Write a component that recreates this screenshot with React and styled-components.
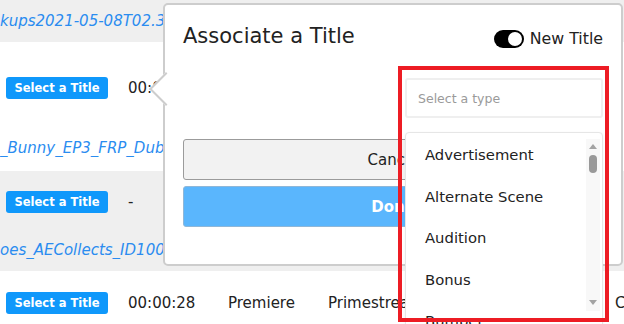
import React from "react"
import styled, { createGlobalStyle } from "styled-components"

const GlobalStyle = createGlobalStyle`
  html, body {
    margin: 0;
    padding: 0;
    background: #fff;
    overflow: hidden;
  }
  body {
    font-family: "DejaVu Sans", "Noto Sans", sans-serif;
    color: #222;
  }
`

const types = ["Advertisement", "Alternate Scene", "Audition", "Bonus", "Bumper"]

const App = () => {
  return (
    <Page>
      <GlobalStyle />
      <Table>
        <Row $shade $height={42}>
          <LinkLine $top={12}>kups2021-05-08T02.30.11_Spot_Final</LinkLine>
        </Row>
        <Row $height={129}>
          <CellLine $top={35}>
            <TitleButton>Select a Title</TitleButton>
            <Cell $clip>00:00:14</Cell>
          </CellLine>
          <LinkLine $top={40}>_Bunny_EP3_FRP_Dub_Master</LinkLine>
        </Row>
        <Row $shade $height={100}>
          <CellLine $top={20}>
            <TitleButton>Select a Title</TitleButton>
            <Cell>-</Cell>
          </CellLine>
          <LinkLine $top={28}>oes_AECollects_ID1001_Final</LinkLine>
        </Row>
        <Row $height={53}>
          <CellLine $top={21}>
            <TitleButton>Select a Title</TitleButton>
            <Cell>00:00:28</Cell>
            <Cell>Premiere</Cell>
            <Cell $wide>Primestream Demo</Cell>
            <Cell>C</Cell>
          </CellLine>
        </Row>
      </Table>

      <Popover>
        <Arrow />
        <Header>
          <Title>Associate a Title</Title>
          <ToggleWrap>
            <Toggle>
              <Knob />
            </Toggle>
            <ToggleLabel>New Title</ToggleLabel>
          </ToggleWrap>
        </Header>
        <SelectRow>
          <SelectBox>Select a type</SelectBox>
        </SelectRow>
        <ActionButton>Cancel</ActionButton>
        <ActionButton $primary>Done</ActionButton>
      </Popover>

      <Menu>
        {types.map((t) => (
          <MenuItem key={t}>{t}</MenuItem>
        ))}
        <ScrollTrack>
          <ArrowUp />
          <Thumb />
          <ArrowDown />
        </ScrollTrack>
      </Menu>

      <Highlight />
    </Page>
  )
}

export default App

const Page = styled.div`
  position: relative;
  width: 624px;
  height: 324px;
  overflow: hidden;
`

const Table = styled.div`
  display: flex;
  flex-direction: column;
`

const Row = styled.div`
  height: ${(p) => p.$height}px;
  background: ${(p) => (p.$shade ? "#efefef" : "#fff")};
  display: flex;
  flex-direction: column;
  overflow: hidden;
`

const LinkLine = styled.div`
  margin-top: ${(p) => p.$top}px;
  width: 164px;
  overflow: hidden;
  font-style: italic;
  font-size: 15px;
  line-height: 18px;
  color: #2a8cf0;
  white-space: nowrap;
`

const CellLine = styled.div`
  margin-top: ${(p) => p.$top}px;
  display: flex;
  align-items: center;
  padding-left: 6px;
  height: 22px;
`

const TitleButton = styled.div`
  width: 102px;
  height: 22px;
  flex: none;
  border-radius: 3px;
  background: #0f98fb;
  color: #fff;
  font-weight: bold;
  font-size: 11.5px;
  display: flex;
  align-items: center;
  justify-content: center;
  margin-right: 20px;
`

const Cell = styled.div`
  width: ${(p) => (p.$wide ? 287 : p.$clip ? 35 : 100)}px;
  flex: none;
  font-size: 15px;
  color: #222;
  white-space: nowrap;
  overflow: hidden;
`

const Popover = styled.div`
  position: absolute;
  left: 163px;
  top: 3px;
  width: 460px;
  height: 263px;
  box-sizing: border-box;
  border: 2px solid #cdcdcd;
  border-radius: 5px;
  background: #fff;
  padding: 16px 18px 0 18px;
  display: flex;
  flex-direction: column;
`

const Arrow = styled.div`
  position: absolute;
  left: -11px;
  top: 72px;
  width: 22px;
  height: 22px;
  background: #fff;
  border-left: 2px solid #cdcdcd;
  border-bottom: 2px solid #cdcdcd;
  transform: rotate(45deg);
`

const Header = styled.div`
  display: flex;
  justify-content: space-between;
  align-items: flex-start;
  height: 42px;
`

const Title = styled.div`
  font-size: 21px;
  line-height: 30px;
  color: #222;
`

const ToggleWrap = styled.div`
  display: flex;
  align-items: center;
  gap: 6px;
  margin-top: 8px;
`

const Toggle = styled.div`
  width: 30px;
  height: 18px;
  border-radius: 9px;
  background: #000;
  display: flex;
  align-items: center;
  justify-content: flex-end;
  padding-right: 2px;
  box-sizing: border-box;
`

const Knob = styled.div`
  width: 14px;
  height: 14px;
  border-radius: 50%;
  background: #fff;
`

const ToggleLabel = styled.div`
  font-size: 15.8px;
  color: #222;
`

const SelectRow = styled.div`
  display: flex;
  justify-content: flex-end;
  margin-top: 15px;
`

const SelectBox = styled.div`
  width: 198px;
  height: 40px;
  box-sizing: border-box;
  border: 2px solid #efefef;
  border-radius: 3px;
  padding-left: 11px;
  display: flex;
  align-items: center;
  font-size: 12.5px;
  color: #9a9a9a;
`

const ActionButton = styled.div`
  height: 41px;
  box-sizing: border-box;
  margin-top: ${(p) => (p.$primary ? 6 : 21)}px;
  border: 1px solid ${(p) => (p.$primary ? "#8fb7d8" : "#9b9b9b")};
  border-radius: 3px;
  background: ${(p) => (p.$primary ? "#5ab6fd" : "#f2f2f2")};
  color: ${(p) => (p.$primary ? "#fff" : "#222")};
  font-size: 15px;
  font-weight: ${(p) => (p.$primary ? 600 : 400)};
  display: flex;
  align-items: center;
  justify-content: center;
`

const Menu = styled.div`
  position: absolute;
  left: 405px;
  top: 132px;
  width: 198px;
  height: 200px;
  box-sizing: border-box;
  border: 1px solid #e6e6e6;
  border-radius: 4px;
  background: #fff;
  padding-top: 1px;
  box-shadow: 0 1px 3px rgba(0, 0, 0, 0.06);
`

const MenuItem = styled.div`
  height: 41.5px;
  display: flex;
  align-items: center;
  padding-left: 19px;
  font-size: 14.8px;
  color: #222;
`

const ScrollTrack = styled.div`
  position: absolute;
  right: 2px;
  top: 6px;
  width: 14px;
  height: 172px;
  background: #f8f8f8;
  display: flex;
  flex-direction: column;
  align-items: center;
`

const ArrowUp = styled.div`
  margin-top: 5px;
  width: 0;
  height: 0;
  border-left: 4px solid transparent;
  border-right: 4px solid transparent;
  border-bottom: 5px solid #a3a3a3;
`

const Thumb = styled.div`
  margin-top: 6px;
  width: 8px;
  height: 18px;
  border-radius: 4px;
  background: #999;
`

const ArrowDown = styled.div`
  margin-top: auto;
  margin-bottom: 6px;
  width: 0;
  height: 0;
  border-left: 4px solid transparent;
  border-right: 4px solid transparent;
  border-top: 5px solid #a3a3a3;
`

const Highlight = styled.div`
  position: absolute;
  left: 398px;
  top: 66px;
  width: 211px;
  height: 256px;
  box-sizing: border-box;
  border: 4px solid #ed1c24;
  pointer-events: none;
`
